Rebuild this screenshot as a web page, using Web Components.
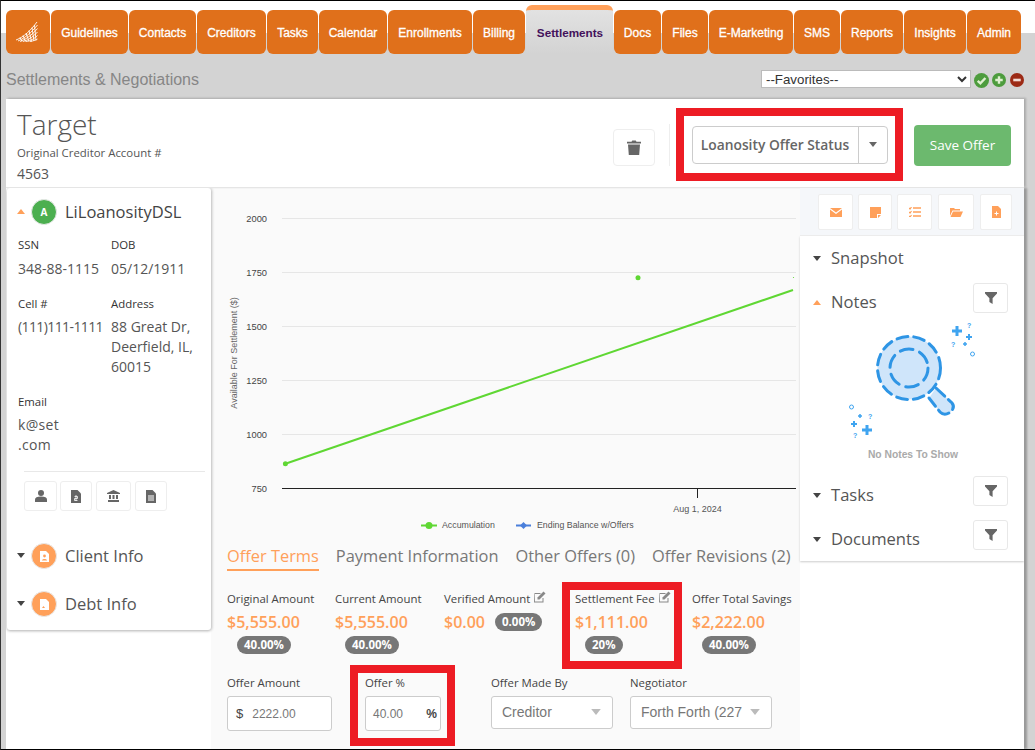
<!DOCTYPE html>
<html lang="en"><head><meta charset="utf-8"><title>Settlements</title>
<style>
html,body{margin:0;padding:0;height:750px;overflow:hidden;background:#d3d3d3}
body{font-family:"Open Sans","Liberation Sans",sans-serif;color:#555}
</style></head><body>
<x-app>
  <x-nav slot="nav">
    <x-tab logo w="44"><svg width="22" height="20" viewBox="0 0 22 20" fill="none" stroke="#fff" stroke-width=".9"><path d="M0 18C8 15 15 8 21 0M2 19C9 16 16 10 21.500 3M4 19.500C11 17 17 12 21.500 6.500M7 19.500C13 18 18 14 21.500 10M10 19.500C15 19 19 16 21.500 13.500M14 19.500C17 19 20 18 21.500 17M4 15.500 6 19.500M7 13.500 9.500 19.500M10 11 13 19.500M13 8.500 15.500 19.500M16 5.500 18 19M18.500 3 20 18.500"/></svg></x-tab>
    <x-tab w="77">Guidelines</x-tab><x-tab w="67">Contacts</x-tab><x-tab w="69">Creditors</x-tab><x-tab w="51">Tasks</x-tab><x-tab w="68">Calendar</x-tab><x-tab w="84">Enrollments</x-tab><x-tab w="52">Billing</x-tab><x-tab active w="87">Settlements</x-tab><x-tab w="47">Docs</x-tab><x-tab w="46">Files</x-tab><x-tab w="84">E-Marketing</x-tab><x-tab w="46">SMS</x-tab><x-tab w="62">Reports</x-tab><x-tab w="62">Insights</x-tab><x-tab w="54">Admin</x-tab>
  </x-nav>
  <x-titlebar slot="title"></x-titlebar>
  <x-offer-header slot="head"></x-offer-header>
  <x-client-panel slot="left"></x-client-panel>
  <x-center slot="center"></x-center>
  <x-side slot="right"></x-side>
</x-app>
<script>
const I={
 caretD:'<svg width="8" height="5" viewBox="0 0 8 5"><path d="M0 0h8L4 5z" fill="currentColor"/></svg>',
 caretU:'<svg width="8" height="5" viewBox="0 0 8 5"><path d="M0 5h8L4 0z" fill="currentColor"/></svg>',
 filter:'<svg width="12" height="12" viewBox="0 0 12 12"><path d="M0 0h12v1.600L7.600 6.200V12L4.400 10V6.200L0 1.600z" fill="#666"/></svg>',
 edit:'<svg width="13" height="12" viewBox="0 0 13 12"><path d="M1.500 2h6v1H2v7.500h7.500V7h1v4.500H1z" fill="#888"/><path d="M4.500 6.500 10.500.5 12.500 2.500 6.500 8.500H4.500z" fill="#888"/></svg>',
};
function def(name,html,init){
  const t=document.createElement('template');t.innerHTML=html;
  customElements.define(name,class extends HTMLElement{
    constructor(){super();this.attachShadow({mode:'open'}).appendChild(t.content.cloneNode(true));}
    connectedCallback(){init&&init.call(this,this.shadowRoot);}
  });
}
def('x-app',`<style>
:host{display:grid;box-sizing:border-box;width:1035px;height:750px;border-top:1px solid #000;border-left:1px solid #333;border-bottom:1px solid #000;
 background:linear-gradient(#fff 32px,#d3d3d3 32px);grid-template-rows:53px 45px 89px 1fr;grid-template-columns:205px 589px 224px 11px;padding-left:5px;overflow:hidden;font-family:"Open Sans","Liberation Sans",sans-serif}
.nav{grid-column:1/5;grid-row:1}.title{grid-column:1/5;grid-row:2}
.head{grid-column:1/4;grid-row:3;box-shadow:2px -1px 2px #aaa;z-index:1}
.body{grid-column:1/4;grid-row:4;display:grid;grid-template-columns:205px 589px 224px;background:#fff;box-shadow:3px 0 2px #999;min-height:0;overflow:hidden}
</style>
<div class="nav"><slot name="nav"></slot></div>
<div class="title"><slot name="title"></slot></div>
<div class="head"><slot name="head"></slot></div>
<div class="body"><slot name="left"></slot><slot name="center"></slot><slot name="right"></slot></div>`);
def('x-nav',`<style>:host{display:flex;align-items:flex-end;gap:1px;height:53px}</style><slot></slot>`);
def('x-tab',`<style>
:host{display:flex;align-items:center;justify-content:center;box-sizing:border-box;height:44px;padding-top:2px;background:#e0701b;color:#fff;border-radius:6px;font:normal 12px "Liberation Sans",Arial,sans-serif;-webkit-text-stroke:.3px #fff;flex:none}
:host([logo]){padding:0 3px 0 0}
:host([active]){height:49px;padding:0 0 0 1px;background:linear-gradient(#e2e2e2,#d3d3d3);color:#43115b;border-top:5px solid #ffa05a;border-radius:6px 6px 0 0;font-weight:bold;font-size:11.700px;-webkit-text-stroke:0}
</style><slot></slot>`,function(){this.style.width=this.getAttribute('w')+'px'});
def('x-titlebar',`<style>
:host{display:flex;align-items:center;height:45px;padding-top:7px;box-sizing:border-box}
h1{font:normal 16px "Liberation Sans",Arial,sans-serif;color:#868686;margin:0;flex:1}
select{width:210px;height:18px;margin:-2px 3px 0 0;box-sizing:border-box;font:13.300px "Liberation Sans",Arial,sans-serif;background:#fff;border:1px solid #bbb;color:#333;padding:0;border-radius:0}
svg{display:block;flex:none}.r{display:flex;margin-right:11px;align-items:center}
</style><h1>Settlements &amp; Negotiations</h1>
<select><option>--Favorites--</option></select>
<div class="r">
<svg width="15" height="15" viewBox="0 0 15 15"><circle cx="7.500" cy="7.500" r="7.500" fill="#4d9c3d"/><path d="M3.700 7.800 6.400 10.400 11.400 5" stroke="#dff0d0" stroke-width="2.400" fill="none"/></svg>
<svg width="14" height="14" viewBox="0 0 15 15" style="margin-left:3px"><circle cx="7.500" cy="7.500" r="7.500" fill="#4d9c3d"/><path d="M7.500 3.500v8M3.500 7.500h8" stroke="#dff0d0" stroke-width="2.600"/></svg>
<svg width="14" height="14" viewBox="0 0 15 15" style="margin-left:4px"><circle cx="7.500" cy="7.500" r="7.500" fill="#9c2a15"/><path d="M3.500 7.500h8" stroke="#f3dcd5" stroke-width="2.800"/></svg>
</div>`);
def('x-offer-header',`<style>
:host{display:flex;align-items:center;height:89px;background:#fff;border-bottom:1px solid #e5e5e5;box-sizing:border-box;padding:6px 0 0 11px}
.t{flex:1;display:flex;flex-direction:column}
h2{font:300 28px/30px "Open Sans",sans-serif;color:#555;margin:0}
.l{font-size:11.400px;line-height:16px;color:#555;margin-top:6px}.v{font-size:14px;line-height:20px;margin-top:3px;color:#555}
.tr{width:42px;height:37px;box-sizing:border-box;border:1px solid #eee;border-radius:4px;display:flex;align-items:center;justify-content:center;margin-top:2px}
.d{width:1px;height:42px;background:#eee;margin:-3px 6px 0 14px}
.red{border:8px solid #ed1c24;width:227px;height:73px;box-sizing:border-box;display:flex;align-items:center;justify-content:center;background:#fff;margin-top:-4px;}
.sp{display:flex;height:38px;width:196px;box-sizing:border-box;border:1px solid #ccc;border-radius:4px;margin-top:1px;font-weight:600;font-size:13.800px;color:#666}
.sp b{font-weight:600;flex:1;display:flex;align-items:center;justify-content:center;border-right:1px solid #ccc;white-space:nowrap}
.sp i{width:28px;display:flex;align-items:center;justify-content:center;color:#666}
.save{width:97px;height:41px;background:#6cb96e;color:#fff;border-radius:4px;display:flex;align-items:center;justify-content:center;font-size:13.500px;margin:-2px 13px 0 11px}
</style>
<div class="t"><h2>Target</h2><div class="l">Original Creditor Account #</div><div class="v">4563</div></div>
<div class="tr"><svg width="14" height="15" viewBox="0 0 14 15"><path d="M0 1.800h4.500L5.300.5h3.400l.8 1.300H14v1.700H0zM1 4.500h12l-.8 10.500H1.800z" fill="#666"/></svg></div>
<div class="d"></div>
<div class="red"><div class="sp"><b>Loanosity Offer Status</b><i>${I.caretD.replace('width="8" height="5"','width="10" height="5"')}</i></div></div>
<div class="save">Save Offer</div>`);
def('x-client-panel',`<style>
:host{display:block;background:#fff;position:relative;z-index:1}
.p{margin-left:1px;height:442px;box-sizing:border-box;background:#fff;box-shadow:0 1px 3px #bbb,1px 0 3px #ccc;border-radius:3px;padding:11px 0 0 11px;position:relative}
.h{display:flex;align-items:center;height:26px;box-sizing:border-box;padding-bottom:2px;font-size:16.500px;color:#444;gap:6px;white-space:nowrap;margin-left:-1px}
.h>span:first-child{display:flex;width:8px}
.or{color:#ffa05a}.dk{color:#444}
.av{width:26px;height:26px;border-radius:50%;background:#4caf50;color:#fff;font:bold 10px "Open Sans",sans-serif;display:flex;align-items:center;justify-content:center;border:1px solid #e8e8e8;box-sizing:border-box;flex:none;margin:0 2px -2px 0}
.av.o{background:#ffa05a}
.g{display:grid;grid-template-columns:93px 1fr;font-size:14px;line-height:20px;color:#555;margin-top:12px}
.g label{display:block;font-size:11.400px;line-height:16px;color:#333;margin-bottom:5px}
.g>.a label{margin-bottom:6px}
.g>.a,.g>.c{margin-bottom:17px}
.line{height:1px;background:#e8e8e8;margin:16px 6px 9px 6px}
.b{display:flex;gap:3px;margin-left:6px}
.b span{height:30px;box-sizing:border-box;border:1px solid #eee;border-radius:3px;display:flex;align-items:center;justify-content:center}
</style><div class="p">
<div class="h"><span class="or">${I.caretU}</span><span class="av">A</span>LiLoanosityDSL</div>
<div class="g">
<div class="a"><label>SSN</label>348-88-1115</div><div class="a"><label>DOB</label>05/12/1911</div>
<div class="c"><label>Cell #</label><span style="letter-spacing:-.6px">(111)111-1111</span></div><div class="c"><label>Address</label>88 Great Dr,<br>Deerfield, IL,<br>60015</div>
<div style="grid-column:1/3;letter-spacing:.3px"><label style="letter-spacing:0">Email</label>k@set<br>.com</div>
</div>
<div class="line"></div>
<div class="b">
<span style="width:33px"><svg width="12" height="12" viewBox="0 0 12 12"><circle cx="6" cy="3" r="3" fill="#666"/><path d="M0 12V9.500C0 7.500 2 6.500 6 6.500s6 1 6 3V12z" fill="#666"/></svg></span>
<span style="width:32px"><svg width="10" height="13" viewBox="0 0 10 13"><path d="M0 0h6.500L10 3.500V13H0z" fill="#666"/><path d="M5 5v6M3.500 6.500h3v2h-3v2h3" stroke="#fff" stroke-width=".8" fill="none"/></svg></span>
<span style="width:35px;margin-left:1px"><svg width="13" height="12" viewBox="0 0 13 12"><path d="M6.500 0 13 3v1H0V3zM1 10h11v2H1zM2 5h2v4H2zM5.500 5h2v4h-2zM9 5h2v4H9z" fill="#666"/></svg></span>
<span style="width:32px;margin-left:1px"><svg width="10" height="13" viewBox="0 0 10 13"><path d="M0 0h6.500L10 3.500V13H0z" fill="#666"/><path d="M2 6h6M2 8h6M2 10h6" stroke="#fff"/></svg></span>
</div>
<div class="h" style="margin-top:32px;color:#555"><span class="dk">${I.caretD}</span><span class="av o"><svg width="9" height="11" viewBox="0 0 9 11"><path d="M0 0h6l3 3v8H0z" fill="#fff"/><circle cx="4.500" cy="5" r="1.400" fill="#ffa05a"/><path d="M2 9.500c0-2 5-2 5 0z" fill="#ffa05a"/></svg></span>Client Info</div>
<div class="h" style="margin-top:22px;color:#555"><span class="dk">${I.caretD}</span><span class="av o"><svg width="9" height="11" viewBox="0 0 9 11"><path d="M0 0h6l3 3v8H0z" fill="#fff"/><path d="M2 9l1.500-2L5 9z" fill="#ffa05a"/></svg></span>Debt Info</div>
</div>`);
def('x-center',`<style>
:host{display:flex;flex-direction:column;background:#fafafa;min-width:0;overflow:hidden}
svg{display:block;flex:none}
.tabs{display:flex;gap:17px;margin:2px 0 0 16px;font-size:16.400px;line-height:27px;color:#777;white-space:nowrap}
.tabs .on{color:#ffa05a;border-bottom:2px solid #ffa05a;height:27px}
.stats{display:flex;margin:20px 0 0 16px}
.row{display:flex;margin:11px 0 0 16px;position:relative}
x-stat{flex:none}
.red1{border:8px solid #ed1c24;box-sizing:border-box;width:120px;height:87px;margin:-9px 10px -15px 10px;padding:1px 0 0 5px}
.f{display:flex;flex-direction:column;font-size:11.400px;line-height:16px;color:#444}
.inp{margin-top:5px;height:35px;box-sizing:border-box;border:1px solid #ccc;border-radius:3px;background:#fff;display:flex;align-items:center;font:12px "Liberation Sans",Arial,sans-serif;color:#777}
.sel{margin-top:5px;height:33px;box-sizing:border-box;border:1px solid #ccc;border-radius:3px;background:#fff;display:flex;align-items:center;justify-content:space-between;font:14px "Liberation Sans",Arial,sans-serif;color:#777;padding:0 11px 1px 10px;white-space:nowrap;overflow:hidden}
.sel svg{color:#bbb}
.red2{border:8px solid #ed1c24;box-sizing:border-box;width:105px;height:81px;margin:0 36px 0 18px;padding:2px 0 0 7px;background:#fafafa}
</style>
<svg width="589" height="352" viewBox="211 188 589 352" font-family="Liberation Sans, Arial, sans-serif" font-size="9.300" fill="#444">
<g stroke="#e6e6e6"><path d="M282 218.500H796M282 272.500H796M282 326.500H796M282 380.500H796M282 434.500H796"/></g>
<path d="M282 488.500H796M697.500 489V498" stroke="#222" fill="none"/>
<g text-anchor="end"><text x="267" y="222">2000</text><text x="267" y="276">1750</text><text x="267" y="330">1500</text><text x="267" y="384">1250</text><text x="267" y="438">1000</text><text x="267" y="492">750</text></g>
<text transform="translate(237 353) rotate(-90)" text-anchor="middle" font-size="9" fill="#666">Available For Settlement ($)</text>
<path d="M285.400 463.700 793 290" stroke="#5fd733" stroke-width="2" fill="none"/>
<circle cx="285.400" cy="463.700" r="2.500" fill="#5fd733"/><circle cx="638" cy="277.700" r="2.500" fill="#5fd733"/>
<circle cx="793.500" cy="277.500" r=".6" fill="#5fd733"/>
<text x="697.500" y="512" text-anchor="middle" font-size="9" fill="#555">Aug 1, 2024</text>
<path d="M421 525.500H437" stroke="#5fd733" stroke-width="2"/><circle cx="429" cy="525.500" r="3.500" fill="#5fd733"/>
<text x="442" y="528" font-size="8.800" fill="#555">Accumulation</text>
<path d="M516 525.500H531" stroke="#4a7fdb" stroke-width="2"/><path d="M523.500 522 527 525.500 523.500 529 520 525.500z" fill="#4a7fdb"/>
<text x="537" y="528" font-size="8.800" fill="#555">Ending Balance w/Offers</text>
</svg>
<div class="tabs"><span class="on">Offer Terms</span><span>Payment Information</span><span>Other Offers (0)</span><span>Offer Revisions (2)</span></div>
<div class="stats">
<x-stat style="width:108px" amt="$5,555.00" pct="40.00%" off="10">Original Amount</x-stat>
<x-stat style="width:109px" amt="$5,555.00" pct="40.00%" off="10">Current Amount</x-stat>
<x-stat style="width:108px" amt="$0.00" pct="0.00%" edit inline>Verified Amount</x-stat>
<div class="red1"><x-stat amt="$1,111.00" pct="20%" off="10" edit>Settlement Fee</x-stat></div>
<x-stat style="width:108px" amt="$2,222.00" pct="40.00%" off="10">Offer Total Savings</x-stat>
</div>
<div class="row">
<div class="f" style="width:105px;margin-top:10px">Offer Amount<div class="inp"><b style="font-weight:400;font-size:13px;color:#444;margin:0 9px 0 8px">$</b>2222.00</div></div>
<div class="red2"><div class="f">Offer %<div class="inp" style="width:76px;justify-content:space-between;padding:0 3px 0 7px"><span>40.00</span><b style="color:#444;font-size:12px">%</b></div></div></div>
<div class="f" style="width:122px;margin:10px 17px 0 0">Offer Made By<div class="sel">Creditor ${I.caretD.replace('width="8" height="5"','width="10" height="6"')}</div></div>
<div class="f" style="width:142px;margin-top:10px">Negotiator<div class="sel"><span>Forth Forth (227</span> ${I.caretD.replace('width="8" height="5"','width="10" height="6"')}</div></div>
</div>`);
def('x-stat',`<style>
:host{display:block;white-space:nowrap;color:#444}
.l{font-size:11.400px;line-height:16px;display:flex;align-items:center;gap:3px}
.a{font-size:16px;font-weight:600;color:#ffa05a;line-height:24px;margin-top:3px}
.w{display:flex;flex-direction:column;align-items:flex-start}
.w.in{flex-direction:row;align-items:center;gap:10px}
.b{display:inline-block;background:#777;color:#fff;font-size:11.500px;font-weight:700;line-height:18px;padding:0 7px;border-radius:9px;margin-top:2px}
.in .b{margin-top:3px}
</style><div class="l"><span><slot></slot></span><span id="e"></span></div><div class="w" id="w"><div class="a" id="a"></div><span class="b" id="b"></span></div>`,function(s){
 s.getElementById('a').textContent=this.getAttribute('amt');
 const b=s.getElementById('b');b.textContent=this.getAttribute('pct');
 if(this.getAttribute('off'))b.style.marginLeft=this.getAttribute('off')+'px';
 if(this.hasAttribute('inline'))s.getElementById('w').classList.add('in');
 if(this.hasAttribute('edit'))s.getElementById('e').innerHTML=I.edit;
});
def('x-side',`<style>
:host{display:block;background:#fff;position:relative;z-index:1}
.tools{height:48px;background:#f5f7fa;border-bottom:1px solid #eee;box-sizing:border-box;display:flex;gap:5px;padding:6px 0 0 18px}
.tools span{height:36px;background:#fff;border:1px solid #eee;border-radius:2px;box-sizing:border-box;display:flex;align-items:center;justify-content:center}
.list{box-shadow:0 1px 2px #ccc;height:325px;background:#fff}
.r{display:flex;align-items:center;height:44px;box-sizing:border-box;padding:0 16px 0 13px;font-size:16.600px;color:#555}
.r .c{width:18px;display:flex;color:#444;margin-top:1px}.r .c.or{color:#ffa05a}
.r b{font-weight:400;flex:1;margin-top:-2px}
.r i{width:35px;height:30px;border:1px solid #e8e8e8;border-radius:3px;box-sizing:border-box;display:flex;align-items:center;justify-content:center;background:#fff;margin-top:-8px}
.il{display:block;margin-top:-4px}
.nn{font:bold 10.300px "Liberation Sans",Arial,sans-serif;color:#aaa;text-align:center;line-height:14px;margin:0 0 11px 0;width:226px}
</style>
<div class="tools">
<span style="width:35px"><svg width="12" height="9" viewBox="0 0 12 9"><path d="M0 0h12L6 4.500zM0 1.500 6 6l6-4.500V9H0z" fill="#ffa05a"/></svg></span>
<span style="width:34px"><svg width="11" height="11" viewBox="0 0 11 11"><path d="M0 0h11v7H7v4H0zM8 8h3L8 11z" fill="#ffa05a"/></svg></span>
<span style="width:35px"><svg width="12" height="10" viewBox="0 0 12 10"><path d="M4 1h8M4 5h8M4 9h8" stroke="#ffa05a" stroke-width="1.500"/><path d="M0 1l1 1 1.500-2M0 5l1 1 1.500-2M0 9l1 1 1.500-2" stroke="#ffa05a" stroke-width="1.200" fill="none"/></svg></span>
<span style="width:36px;margin-left:1px"><svg width="13" height="9" viewBox="0 0 13 9"><path d="M0 0h4l1 1h5v1.500H2.500L0 8zM3 3.500h10L10.500 9H.5z" fill="#ffa05a"/></svg></span>
<span style="width:32px;margin-left:1px"><svg width="9" height="12" viewBox="0 0 9 12"><path d="M0 0h6l3 3v9H0z" fill="#ffa05a"/><path d="M4.500 5.500v4M2.500 7.500h4" stroke="#fff"/></svg></span>
</div>
<div class="list">
<div class="r"><span class="c">${I.caretD}</span><b>Snapshot</b></div>
<div class="r"><span class="c or">${I.caretU}</span><b>Notes</b><i>${I.filter}</i></div>
<svg class="il" width="223" height="128" viewBox="801 320 223 128">
<g fill="#cfe5fa" stroke="#2e95e5" stroke-width="3" stroke-linecap="round">
<circle cx="910" cy="368" r="31.500" stroke-dasharray="11 6"/></g>
<circle cx="910" cy="368" r="19" fill="none" stroke="#2e95e5" stroke-width="3" stroke-dasharray="13 7" stroke-linecap="round"/>
<path d="M937 388 953 403Q957 408 950 413 945 416 941 412L930 398" fill="#cfe5fa" stroke="#2e95e5" stroke-width="3" stroke-dasharray="12 5" stroke-linecap="round"/>
<g stroke="#3fa4f0" fill="none"><path d="M953 331h10M958 326v10" stroke-width="3"/><path d="M967 337h6M970 334v6" stroke-width="2"/><path d="M964 344h4M966 342v4" stroke-width="1.500"/><circle cx="973.500" cy="354" r="2"/>
<path d="M863 430h10M868 425v10" stroke-width="3"/><path d="M852 424h6M855 421v6" stroke-width="2"/><path d="M859 416h4M861 414v4" stroke-width="1.500"/><circle cx="852.500" cy="407" r="2"/></g>
<g font-family="Liberation Sans,Arial,sans-serif" font-size="7" font-weight="700" fill="#3fa4f0"><text x="968" y="328">?</text><text x="952" y="347">?</text><text x="869" y="419">?</text><text x="854" y="438">?</text></g>
</svg>
<div class="nn">No Notes To Show</div>
<div class="r"><span class="c">${I.caretD}</span><b>Tasks</b><i>${I.filter}</i></div>
<div class="r"><span class="c">${I.caretD}</span><b>Documents</b><i>${I.filter}</i></div>
</div>`);
</script>
</body></html>
